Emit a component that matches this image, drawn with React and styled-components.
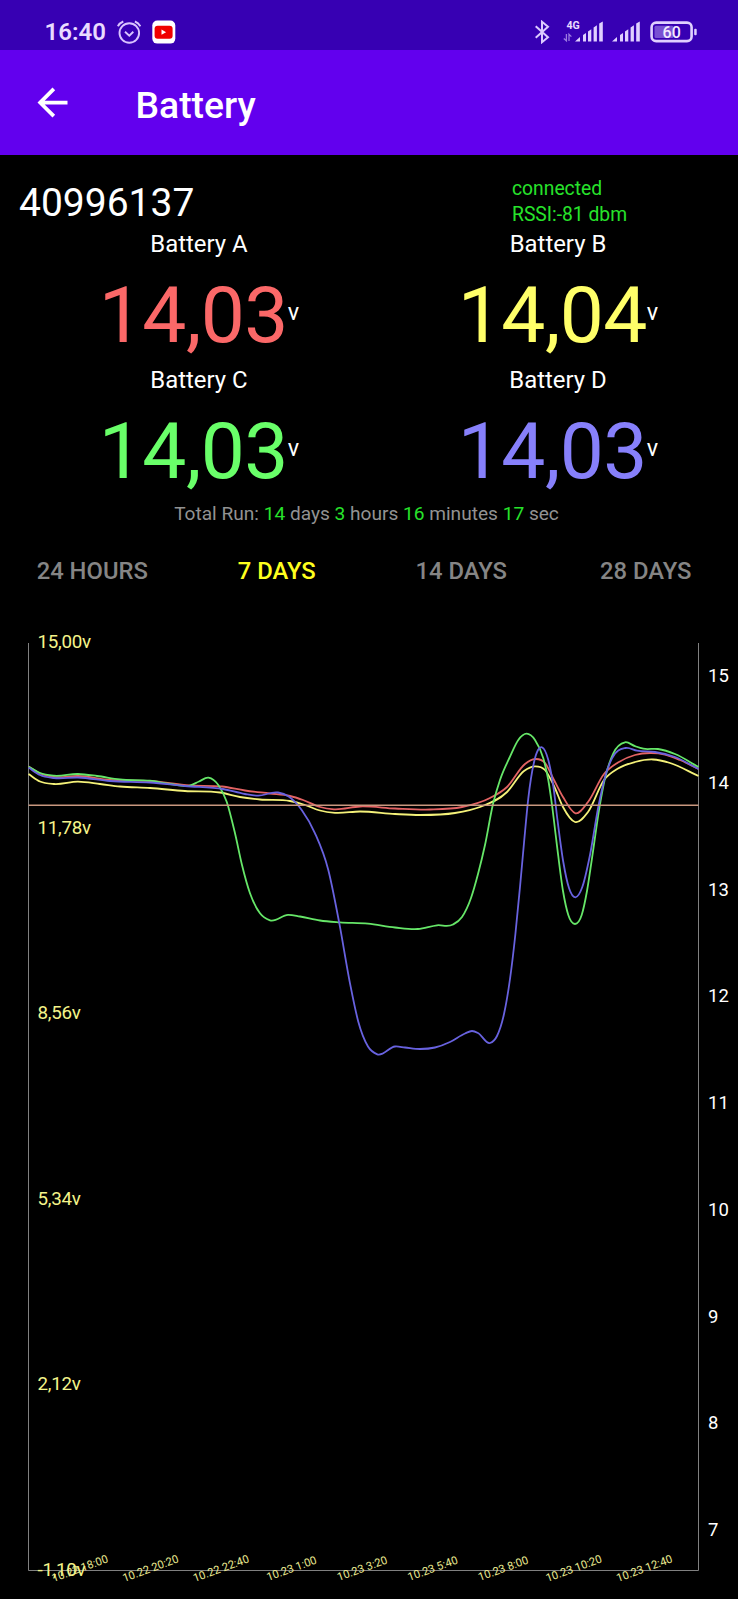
import React from "react";
import styled, { createGlobalStyle } from "styled-components";

const GlobalStyle = createGlobalStyle`
  body { margin: 0; background: #000; font-family: Roboto, "Liberation Sans", sans-serif; }
`;

const Screen = styled.div`
  width: 738px;
  height: 1599px;
  overflow: hidden;
  background: #000;
  color: #fff;
`;

const StatusBar = styled.div`
  display: flex;
  align-items: center;
  justify-content: space-between;
  box-sizing: border-box;
  height: 50px;
  padding: 13px 41px 0 44.5px;
  background: #3700b3;
  color: #e9dbff;
`;

const StatusGroup = styled.div`
  display: flex;
  align-items: center;
`;

const Clock = styled.span`
  width: 72.5px;
  font-size: 24px;
  font-weight: 600;
  line-height: 26px;
`;

const StatusIcon = styled.svg`
  display: block;
  flex: none;
  margin-left: ${(p) => p.$gap || 0}px;
`;

const AppBar = styled.header`
  display: flex;
  align-items: center;
  height: 105px;
  padding-left: 30px;
  background: #6200ee;
`;

const BackIcon = styled.svg`
  width: 45px;
  height: 45px;
  margin-right: 60.5px;
`;

const Title = styled.h1`
  margin: 5px 0 0;
  font-size: 37.3px;
  font-weight: 500;
  line-height: 44px;
`;

const DeviceRow = styled.div`
  display: flex;
  height: 75px;
  padding-left: 19px;
`;

const DeviceId = styled.div`
  width: 493px;
  font-size: 39px;
  line-height: 97px;
`;

const Connection = styled.div`
  padding-top: 21px;
  color: #27e32b;
  font-size: 19.3px;
  line-height: 26.3px;
`;

const Readings = styled.div`
  display: grid;
  grid-template-columns: 359px 359px;
  padding-left: 19.5px;
`;

const Label = styled.div`
  font-size: 23.9px;
  line-height: 28px;
  text-align: center;
`;

const Reading = styled.div`
  display: flex;
  align-items: center;
  justify-content: center;
  height: 108px;
`;

const Value = styled.span`
  margin-top: 6px;
  color: ${(p) => p.$color};
  font-size: 78.5px;
  letter-spacing: -0.6px;
  line-height: 92px;
`;

const Unit = styled.span`
  font-size: 23.5px;
  line-height: 28px;
`;

const TotalRun = styled.div`
  padding: 1px 5px 0 0;
  color: #929292;
  font-size: 19.1px;
  line-height: 21px;
  text-align: center;
`;

const Amount = styled.span`
  color: #27e32b;
`;

const Tabs = styled.nav`
  display: grid;
  grid-template-columns: repeat(4, 1fr);
  margin-top: 17px;
`;

const Tab = styled.button`
  height: 60px;
  padding: 0;
  border: 0;
  background: none;
  color: ${(p) => (p.$active ? "#ffff1e" : "#858585")};
  font: 500 23.8px Roboto, "Liberation Sans", sans-serif;
`;

const Chart = styled.svg`
  display: block;
  font-family: Roboto, "Liberation Sans", sans-serif;
`;

const batteries = [
  { name: "Battery A", value: "14,03", color: "#fb6868" },
  { name: "Battery B", value: "14,04", color: "#ffff69" },
  { name: "Battery C", value: "14,03", color: "#69ff69" },
  { name: "Battery D", value: "14,03", color: "#8780fb" },
];

const series = [
  {
    color: "#e36363",
    points: [[28.5,766.5],[40,773.5],[54,777],[78,776],[110,780],[150,781],[190,785.5],[222,786.5],[245,790.5],[270,793.5],[290,796],[303,800],[320,807],[334,809.3],[360,806.5],[395,808.5],[430,809.5],[462,807],[490,798],[507,787],[525,764],[535,759],[545,763],[554,780],[563,797],[575.5,813.3],[588,802],[604,774],[618,762.5],[635,755],[650,753],[665,754.5],[680,760],[698.5,769]],
  },
  {
    color: "#f4f179",
    points: [[28.5,774],[40,781.5],[54,784],[78,781.7],[100,784],[120,786.5],[150,788],[185,791],[220,792.5],[240,797],[260,799.5],[290,801],[305,805],[320,810.5],[335,812.8],[360,811.5],[395,814],[420,815],[455,813],[480,807],[507,792],[524,771],[535,766.3],[545,770],[554,786],[563,807],[575,822],[588,812],[604,780],[618,768.5],[635,762],[653,759.5],[670,763],[698.5,776]],
  },
  {
    color: "#66e668",
    points: [[28.5,766.5],[40,773],[54,775.7],[78,774],[97,776],[120,779.5],[150,780.7],[170,784],[190,785.5],[199,781.5],[208.5,777.7],[218.3,785],[226.7,801.7],[235,833.3],[242,865],[250,893.3],[260,913.3],[270,920.3],[288,914.8],[300,916.5],[320,920.5],[340,922.3],[368,923.7],[395,927.5],[418,929],[437,925.3],[453,924.5],[462,917],[471,898],[478,874],[485,845],[493,804],[500,780],[510,756.7],[518.3,740],[526.7,733.7],[535,740],[543.3,758.3],[548.3,780],[552,805],[556.7,843.3],[563,891],[568.3,915],[575,924],[581.7,915],[587,891],[592,858.3],[599.3,808.3],[605,778.3],[613.3,753.3],[625,742.3],[635,746.2],[643.3,748.7],[658,749],[675,754],[698.5,767]],
  },
  {
    color: "#6862df",
    points: [[28.5,767.5],[40,775],[54,778],[78,777.5],[110,781],[150,782.5],[185,786],[223,789],[245,794],[258,795.7],[278,792.5],[288.3,796.3],[301.7,810],[315,833.3],[328.3,870],[339,921.7],[350,983.3],[358.3,1021.7],[368,1046.5],[377.3,1054.3],[395,1046.5],[405,1047.5],[420,1049],[435,1047.5],[450,1042],[465,1033.5],[472,1031],[478,1033],[490,1043],[497,1036],[504,1014],[510,979],[515.3,935],[520,887],[524,843],[528.3,798.3],[534.3,761],[542,747.3],[548.3,760],[553.3,786],[557.7,821.7],[563.3,862],[569,888],[575.3,897.3],[582.3,887],[590,855],[598.3,807],[605,777],[612,758.3],[625.7,748],[637,750.7],[655,752],[675,757],[698.5,769]],
  },
];

const leftScale = ["15,00v", "11,78v", "8,56v", "5,34v", "2,12v", "-1,10v"];
const rightScale = [15, 14, 13, 12, 11, 10, 9, 8, 7];
const times = [
  "10.22 18:00", "10.22 20:20", "10.22 22:40", "10.23 1:00", "10.23 3:20",
  "10.23 5:40", "10.23 8:00", "10.23 10:20", "10.23 12:40",
];

// Smooth curve through the points; each slope weighs the two adjoining
// segments by the length of the opposite one.
function smoothPath(pts) {
  const last = pts.length - 1;
  const rise = (i) => (pts[i + 1][1] - pts[i][1]) / (pts[i + 1][0] - pts[i][0]);
  const slope = pts.map((p, i) => {
    if (i === 0) return rise(0);
    if (i === last) return rise(last - 1);
    const before = p[0] - pts[i - 1][0];
    const after = pts[i + 1][0] - p[0];
    return (rise(i - 1) * after + rise(i) * before) / (before + after);
  });
  return pts.reduce((d, [x, y], i) => {
    if (i === 0) return `M${x} ${y}`;
    const [px, py] = pts[i - 1];
    const h = (x - px) / 3;
    return `${d}C${px + h} ${py + slope[i - 1] * h} ${x - h} ${y - slope[i] * h} ${x} ${y}`;
  }, "");
}

function Signal({ gap }) {
  return (
    <StatusIcon $gap={gap} width="28" height="21" viewBox="0 0 28 21" fill="#e0d0ff">
      <path d="M0 20.5 5 16v4.5zM8 14l3-2v8.5H8zM13 10.5l3.3-2.2v12.2H13zM18.6 6.5l3.3-2.3v16.3h-3.3zM24.2 2.6 27.8.4v20.1h-3.6z" />
    </StatusIcon>
  );
}

export default function App() {
  return (
    <Screen>
      <GlobalStyle />
      <StatusBar>
        <StatusGroup>
          <Clock>16:40</Clock>
          <StatusIcon width="24" height="24" viewBox="0 0 24 24" fill="none" stroke="#d9c4ff" strokeWidth="1.9">
            <circle cx="12.3" cy="13" r="9.8" />
            <path d="M8 11.8l4.3 3.8 4-3.8M.8 6.3Q2.6 3 6.3 1.5M23.4 6.3Q21.6 3 17.9 1.5" />
          </StatusIcon>
          <StatusIcon $gap={10.7} width="24" height="24" viewBox="0 0 24 24">
            <rect x=".3" y=".6" width="23" height="23" rx="5" fill="#fff" />
            <rect x="2.6" y="5.7" width="18" height="13" rx="3" fill="#f00000" />
            <path d="M9.5 9.5v5.3l4.6-2.6z" fill="#fff" />
          </StatusIcon>
        </StatusGroup>
        <StatusGroup>
          <StatusIcon width="16" height="24" viewBox="0 0 16 24" fill="none" stroke="#dccaff" strokeWidth="2">
            <path d="M.7 6.2 13 17.2 7 22.2V1.8l6 5L.7 17.8" />
          </StatusIcon>
          <StatusIcon $gap={12} width="18" height="24" viewBox="0 0 18 24">
            <text x="3.4" y="9" fill="#e9dbff" fontSize="10.6" fontWeight="700" fontFamily="Roboto, sans-serif">4G</text>
            <path d="M3.4 14v6.8L.8 18.4M6 21v-6.8l2.4 2.4" fill="none" stroke="#9c7ae0" strokeWidth="1.3" />
          </StatusIcon>
          <Signal gap={-6} />
          <Signal gap={9} />
          <StatusIcon $gap={10} width="47" height="22" viewBox="0 0 47 22">
            <rect x="1.6" y="1.6" width="40" height="18.5" rx="4.6" fill="none" stroke="#e0d0ff" strokeWidth="2.6" />
            <rect x="4.5" y="4.8" width="19" height="12.2" rx="1.5" fill="#7950d3" />
            <rect x="44.2" y="7.7" width="2.5" height="6.5" rx="1" fill="#e0d0ff" />
            <text x="21.7" y="16.7" fill="#f3eaff" textAnchor="middle" fontSize="16" fontWeight="500" fontFamily="Roboto, sans-serif">60</text>
          </StatusIcon>
        </StatusGroup>
      </StatusBar>

      <AppBar>
        <BackIcon viewBox="0 0 24 24" fill="#fff">
          <path d="M20 11H7.83l5.59-5.59L12 4l-8 8 8 8 1.41-1.41L7.83 13H20z" />
        </BackIcon>
        <Title>Battery</Title>
      </AppBar>

      <DeviceRow>
        <DeviceId>40996137</DeviceId>
        <Connection>
          <div>connected</div>
          <div>RSSI:-81 dbm</div>
        </Connection>
      </DeviceRow>

      <Readings>
        {batteries.map((b) => (
          <div key={b.name}>
            <Label>{b.name}</Label>
            <Reading>
              <Value $color={b.color}>{b.value}</Value>
              <Unit>v</Unit>
            </Reading>
          </div>
        ))}
      </Readings>

      <TotalRun>
        Total Run: <Amount>14</Amount> days <Amount>3</Amount> hours <Amount>16</Amount> minutes{" "}
        <Amount>17</Amount> sec
      </TotalRun>

      <Tabs>
        <Tab>24 HOURS</Tab>
        <Tab $active>7 DAYS</Tab>
        <Tab>14 DAYS</Tab>
        <Tab>28 DAYS</Tab>
      </Tabs>

      <Chart width="738" height="998" viewBox="0 601 738 998">
        <path d="M28.5 643V1570.5H698.5V643" fill="none" stroke="#808080" strokeWidth="1" />
        {series.map((s) => (
          <path key={s.color} d={smoothPath(s.points)} fill="none" stroke={s.color} strokeWidth="1.8" />
        ))}
        <path d="M28.5 805.3H698.5" stroke="#c9977f" strokeWidth="1.4" />
        <g fill="#f4f48a" fontSize="18.8" letterSpacing="-0.3">
          {leftScale.map((t, i) => (
            <text key={t} x="37.5" y={648.2 + i * 185.55}>{t}</text>
          ))}
        </g>
        <g fill="#fff" fontSize="18.5">
          {rightScale.map((t, i) => (
            <text key={t} x="708" y={682.3 + i * 106.7}>{t}</text>
          ))}
        </g>
        <g fill="#e9e990" fontSize="11.2" textAnchor="middle">
          {times.map((t, i) => (
            <text key={t} transform={`translate(${81.2 + i * 70.55} 1572) rotate(-20)`}>{t}</text>
          ))}
        </g>
      </Chart>
    </Screen>
  );
}
